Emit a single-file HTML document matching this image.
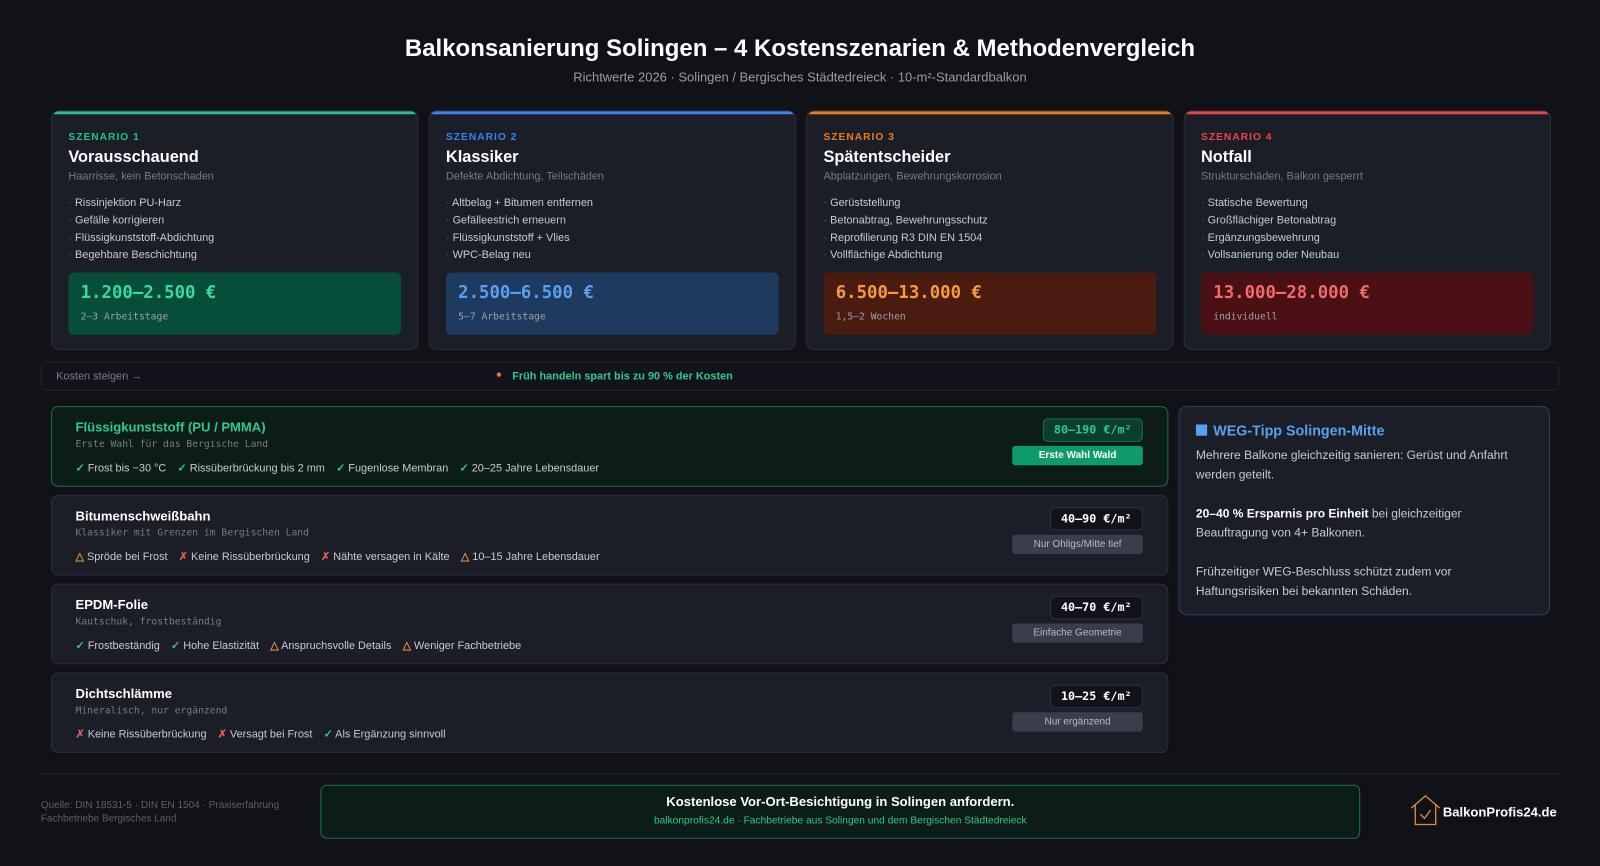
<!DOCTYPE html>
<html><head><meta charset="utf-8"><style>
*{box-sizing:border-box;margin:0;padding:0}
body{width:1600px;height:866px;background:#111218;font-family:"Liberation Sans",sans-serif;color:#e6e7eb;overflow:hidden}
#w{position:relative;width:1568px;height:849px;transform:scale(1.0204);transform-origin:0 0}
h1{position:absolute;top:34px;left:0;width:1568px;text-align:center;font-size:23.5px;font-weight:bold;color:#fff}
.sub{position:absolute;top:69px;left:0;width:1568px;text-align:center;font-size:12.7px;color:#9a9ca6}
.card{position:absolute;top:108px;width:360px;height:235px;background:#1b1d27;border:1px solid #2a2d3a;border-radius:8px;overflow:hidden;padding:20px 16px 0 16px}
.card:before{content:"";position:absolute;left:0;top:0;right:0;height:3px;background:var(--c)}
.lab{font-size:10px;font-weight:bold;letter-spacing:1px;color:var(--c)}
.tt{font-size:16px;font-weight:bold;color:#fff;margin-top:6px}
.ds{font-size:10.7px;color:#777a86;margin-top:3px}
.li{font-size:10.7px;color:#c8cad2;margin-top:12px;line-height:17px}
.li div:before{content:"· ";color:#666}
.pr{position:absolute;left:16px;right:16px;top:158px;height:61px;border-radius:5px;background:var(--b);padding:10px 12px}
.pr .p{font-family:"DejaVu Sans Mono","Liberation Mono",monospace;font-size:17px;font-weight:bold;color:var(--t)}
.pr .d{font-family:"DejaVu Sans Mono","Liberation Mono",monospace;font-size:9.5px;color:#9aa0a8;margin-top:8px}
.bar{position:absolute;left:40px;top:354px;width:1488px;height:29px;background:#13141b;border:1px solid #22242e;border-radius:4px;font-size:10.7px}
.m{position:absolute;left:50px;width:1095px;height:79px;background:#1b1d27;border:1px solid #2a2d3a;border-radius:7px;padding:12px 23px}
.m .n{font-size:12.8px;font-weight:bold;color:#fff}
.m .s{font-family:"DejaVu Sans Mono","Liberation Mono",monospace;font-size:9.5px;color:#777a86;margin-top:4px}
.m .f{font-size:10.7px;color:#c8cad2;margin-top:11px}
.m .f span{margin-right:11px}
.g{color:#2ec98b}.r{color:#e85555}.o{color:#e08a3a}
.pp{position:absolute;right:24px;top:11px;height:23px;padding:0 10px;border:1px solid #2e3140;background:#12131a;border-radius:5px;font-family:"DejaVu Sans Mono","Liberation Mono",monospace;font-size:11.5px;font-weight:bold;line-height:21px;color:#fff}
.tg{position:absolute;right:24px;top:38px;width:128px;height:19px;border-radius:3px;background:#3a3e4c;font-size:9.8px;color:#b8bbc4;text-align:center;line-height:19px}
.tip{position:absolute;left:1155px;top:398px;width:364px;height:205px;background:#1b1d27;border:1px solid #27406a;border-radius:8px;padding:14px 16px;font-size:11.8px;color:#c8cad2;line-height:19px}
</style></head><body><div id="w">
<h1>Balkonsanierung Solingen – 4 Kostenszenarien &amp; Methodenvergleich</h1>
<div class="sub">Richtwerte 2026 · Solingen / Bergisches Städtedreieck · 10-m²-Standardbalkon</div>

<div class="card" style="left:50px;--c:#22c38a;--b:#064d3a;--t:#3fd89c"><div class="lab">SZENARIO 1</div><div class="tt">Vorausschauend</div><div class="ds">Haarrisse, kein Betonschaden</div><div class="li"><div>Rissinjektion PU-Harz</div><div>Gefälle korrigieren</div><div>Flüssigkunststoff-Abdichtung</div><div>Begehbare Beschichtung</div></div><div class="pr"><div class="p">1.200–2.500 €</div><div class="d">2–3 Arbeitstage</div></div></div>
<div class="card" style="left:420px;--c:#3b82f6;--b:#1e3a5f;--t:#5aa0f0"><div class="lab">SZENARIO 2</div><div class="tt">Klassiker</div><div class="ds">Defekte Abdichtung, Teilschäden</div><div class="li"><div>Altbelag + Bitumen entfernen</div><div>Gefälleestrich erneuern</div><div>Flüssigkunststoff + Vlies</div><div>WPC-Belag neu</div></div><div class="pr"><div class="p">2.500–6.500 €</div><div class="d">5–7 Arbeitstage</div></div></div>
<div class="card" style="left:790px;--c:#f07a1a;--b:#4a1c10;--t:#f59a40"><div class="lab">SZENARIO 3</div><div class="tt">Spätentscheider</div><div class="ds">Abplatzungen, Bewehrungskorrosion</div><div class="li"><div>Gerüststellung</div><div>Betonabtrag, Bewehrungsschutz</div><div>Reprofilierung R3 DIN EN 1504</div><div>Vollflächige Abdichtung</div></div><div class="pr"><div class="p">6.500–13.000 €</div><div class="d">1,5–2 Wochen</div></div></div>
<div class="card" style="left:1160px;--c:#ef4444;--b:#4a1014;--t:#f06a6a"><div class="lab">SZENARIO 4</div><div class="tt">Notfall</div><div class="ds">Strukturschäden, Balkon gesperrt</div><div class="li"><div>Statische Bewertung</div><div>Großflächiger Betonabtrag</div><div>Ergänzungsbewehrung</div><div>Vollsanierung oder Neubau</div></div><div class="pr"><div class="p">13.000–28.000 €</div><div class="d">individuell</div></div></div>

<div class="bar"><span style="position:absolute;left:14px;top:8px;color:#777a86">Kosten steigen →</span><span style="position:absolute;left:445px;top:7px;color:#e07a30;font-size:10px">●</span><span style="position:absolute;left:461px;top:8px;color:#2ec98b;font-weight:bold">Früh handeln spart bis zu 90 % der Kosten</span></div>

<div class="m" style="top:398px;background:#0c1d18;border-color:#17704c"><div class="n" style="color:#2ec98b">Flüssigkunststoff (PU / PMMA)</div><div class="s">Erste Wahl für das Bergische Land</div><div class="f"><span><b class="g">✓</b> Frost bis −30 °C</span><span><b class="g">✓</b> Rissüberbrückung bis 2 mm</span><span><b class="g">✓</b> Fugenlose Membran</span><span><b class="g">✓</b> 20–25 Jahre Lebensdauer</span></div><div class="pp" style="background:#0d3d2e;border-color:#17704c;color:#2ec98b">80–190 €/m²</div><div class="tg" style="background:#0f9a6a;color:#fff;font-weight:bold">Erste Wahl Wald</div></div>
<div class="m" style="top:485px"><div class="n">Bitumenschweißbahn</div><div class="s">Klassiker mit Grenzen im Bergischen Land</div><div class="f"><span><b class="o">△</b> Spröde bei Frost</span><span><b class="r">✗</b> Keine Rissüberbrückung</span><span><b class="r">✗</b> Nähte versagen in Kälte</span><span><b class="o">△</b> 10–15 Jahre Lebensdauer</span></div><div class="pp">40–90 €/m²</div><div class="tg">Nur Ohligs/Mitte tief</div></div>
<div class="m" style="top:572px"><div class="n">EPDM-Folie</div><div class="s">Kautschuk, frostbeständig</div><div class="f"><span><b class="g">✓</b> Frostbeständig</span><span><b class="g">✓</b> Hohe Elastizität</span><span><b class="o">△</b> Anspruchsvolle Details</span><span><b class="o">△</b> Weniger Fachbetriebe</span></div><div class="pp">40–70 €/m²</div><div class="tg">Einfache Geometrie</div></div>
<div class="m" style="top:659px"><div class="n">Dichtschlämme</div><div class="s">Mineralisch, nur ergänzend</div><div class="f"><span><b class="r">✗</b> Keine Rissüberbrückung</span><span><b class="r">✗</b> Versagt bei Frost</span><span><b class="g">✓</b> Als Ergänzung sinnvoll</span></div><div class="pp">10–25 €/m²</div><div class="tg">Nur ergänzend</div></div>

<div class="tip"><div style="font-size:14px;font-weight:bold;color:#5aa0f0;margin-bottom:5px"><span style="display:inline-block;width:11px;height:11px;background:#5aa0f0;margin-right:6px"></span>WEG-Tipp Solingen-Mitte</div>Mehrere Balkone gleichzeitig sanieren: Gerüst und Anfahrt werden geteilt.<br><br><b style="color:#fff">20–40 % Ersparnis pro Einheit</b> bei gleichzeitiger Beauftragung von 4+ Balkonen.<br><br>Frühzeitiger WEG-Beschluss schützt zudem vor Haftungsrisiken bei bekannten Schäden.</div>

<div style="position:absolute;left:40px;top:758px;width:1488px;height:1px;background:#23262f"></div>
<div style="position:absolute;left:40px;top:783px;font-size:9.8px;color:#5c5f6a;line-height:13px">Quelle: DIN 18531-5 · DIN EN 1504 · Praxiserfahrung<br>Fachbetriebe Bergisches Land</div>
<div style="position:absolute;left:314px;top:769px;width:1019px;height:53px;background:#0c1c18;border:1px solid #17704c;border-radius:6px;text-align:center"><div style="font-size:12.8px;font-weight:bold;color:#fff;margin-top:8px">Kostenlose Vor-Ort-Besichtigung in Solingen anfordern.</div><div style="font-size:10px;color:#2ec98b;margin-top:6px">balkonprofis24.de · Fachbetriebe aus Solingen und dem Bergischen Städtedreieck</div></div>
<svg style="position:absolute;left:1381px;top:778px" width="32" height="32" viewBox="0 0 32 32" fill="none" stroke="#e08a3a" stroke-width="1.3"><path d="M2 14 L16 2 L30 14 M6 11 V30 H26 V11"/><path d="M11 20 L15 24 L21 16"/></svg>
<div style="position:absolute;left:1414px;top:788px;font-size:12.8px;font-weight:bold;color:#fff">BalkonProfis24.de</div>
</div></body></html>
